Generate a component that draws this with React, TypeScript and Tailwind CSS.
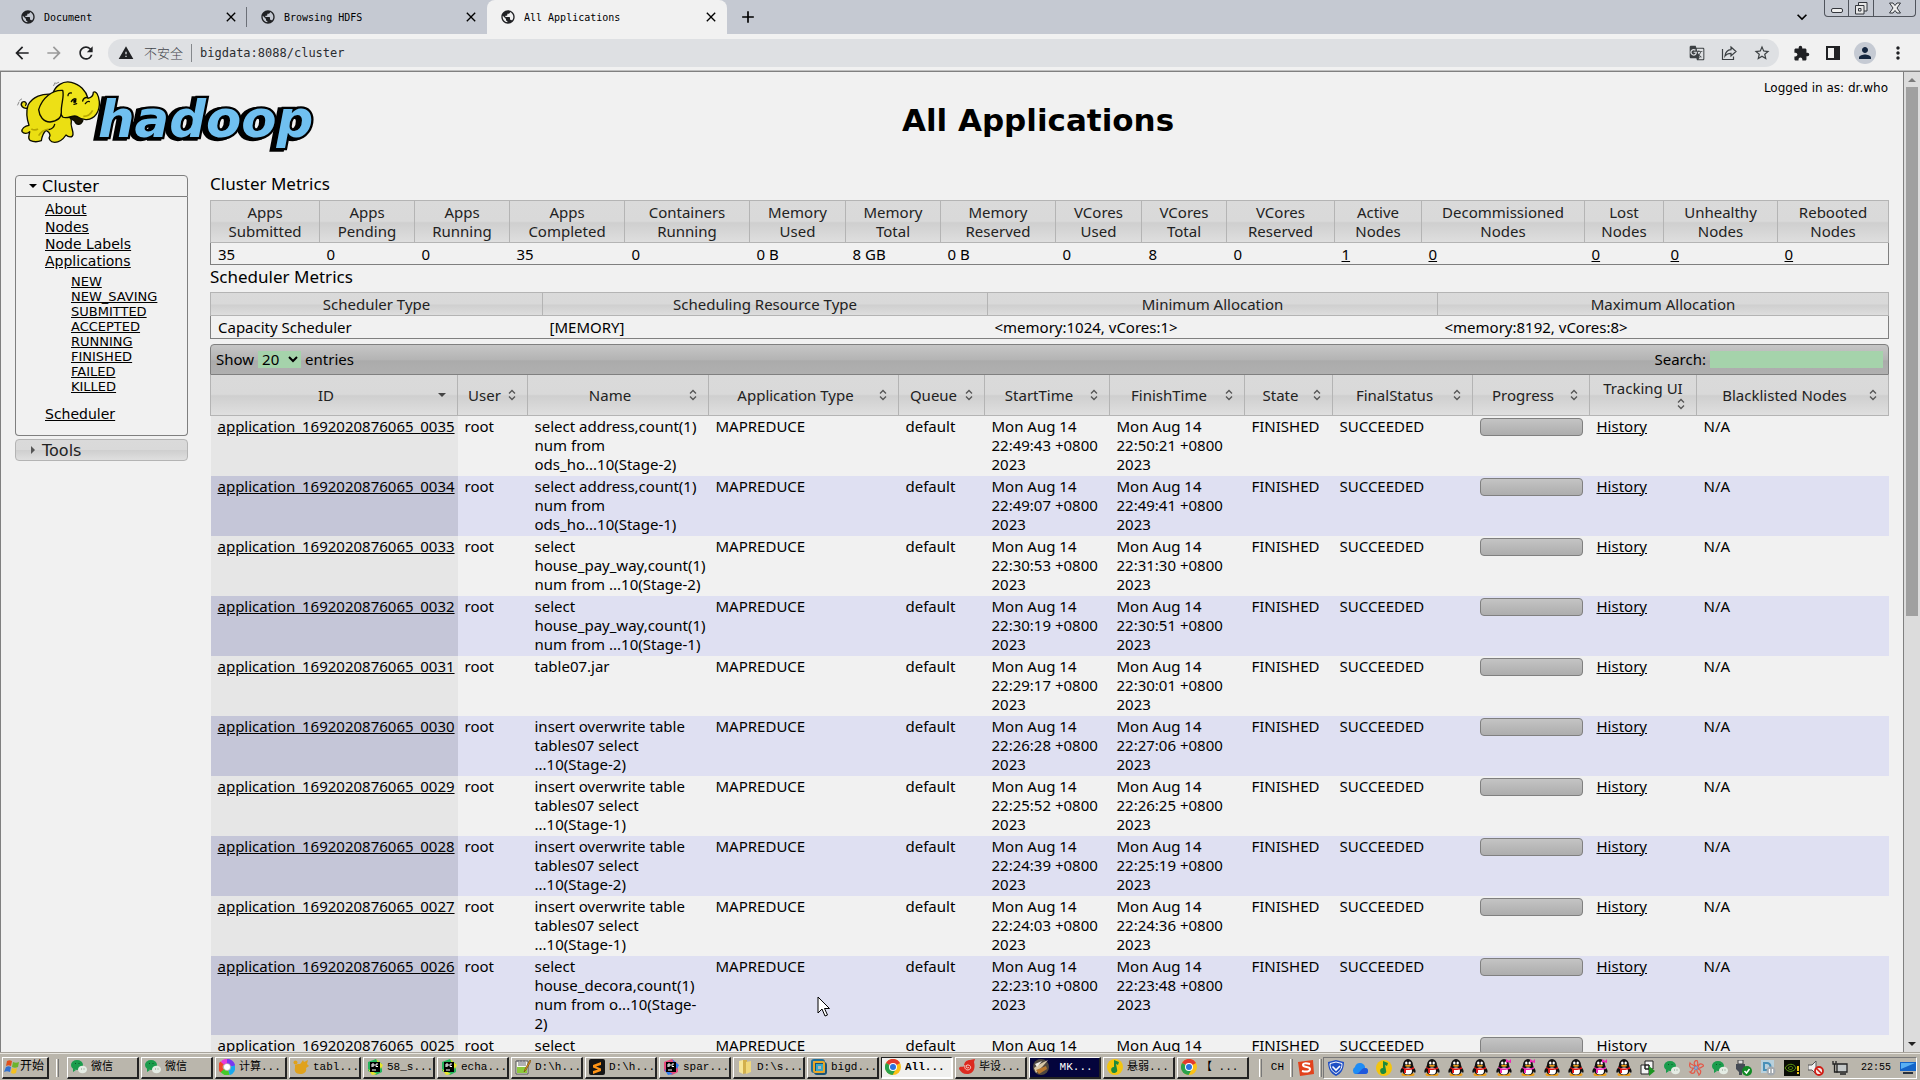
import React, { useState } from "react"
import {
    MdPublic, MdArrowBack, MdArrowForward, MdRefresh, MdWarning, MdGTranslate, MdStarBorder,
    MdExtension, MdPerson, MdMoreVert, MdClose, MdAdd, MdExpandMore,
} from "react-icons/md"

type Column = { label: string; width: string }

const clusterMetrics = [
    { label: "Apps\nSubmitted", value: "35", width: "w-[109px]" },
    { label: "Apps\nPending", value: "0", width: "w-[95px]" },
    { label: "Apps\nRunning", value: "0", width: "w-[95px]" },
    { label: "Apps\nCompleted", value: "35", width: "w-[115px]" },
    { label: "Containers\nRunning", value: "0", width: "w-[125px]" },
    { label: "Memory\nUsed", value: "0 B", width: "w-[96px]" },
    { label: "Memory\nTotal", value: "8 GB", width: "w-[95px]" },
    { label: "Memory\nReserved", value: "0 B", width: "w-[115px]" },
    { label: "VCores\nUsed", value: "0", width: "w-[86px]" },
    { label: "VCores\nTotal", value: "8", width: "w-[85px]" },
    { label: "VCores\nReserved", value: "0", width: "w-[108px]" },
    { label: "Active\nNodes", value: "1", width: "w-[87px]", link: true },
    { label: "Decommissioned\nNodes", value: "0", width: "w-[163px]", link: true },
    { label: "Lost\nNodes", value: "0", width: "w-[79px]", link: true },
    { label: "Unhealthy\nNodes", value: "0", width: "w-[114px]", link: true },
    { label: "Rebooted\nNodes", value: "0", width: "w-[111px]", link: true },
]

const schedulerMetrics = [
    { label: "Scheduler Type", value: "Capacity Scheduler", width: "w-[332px]" },
    { label: "Scheduling Resource Type", value: "[MEMORY]", width: "w-[445px]" },
    { label: "Minimum Allocation", value: "<memory:1024, vCores:1>", width: "w-[450px]" },
    { label: "Maximum Allocation", value: "<memory:8192, vCores:8>", width: "w-[451px]" },
]

const columns: Column[] = [
    { label: "ID", width: "w-[247px]" },
    { label: "User", width: "w-[70px]" },
    { label: "Name", width: "w-[181px]" },
    { label: "Application Type", width: "w-[190px]" },
    { label: "Queue", width: "w-[86px]" },
    { label: "StartTime", width: "w-[125px]" },
    { label: "FinishTime", width: "w-[135px]" },
    { label: "State", width: "w-[88px]" },
    { label: "FinalStatus", width: "w-[140px]" },
    { label: "Progress", width: "w-[117px]" },
    { label: "Tracking UI", width: "w-[107px]" },
    { label: "Blacklisted Nodes", width: "w-[192px]" },
]

const day = (time: string) => "Mon Aug 14\n" + time + " +0800\n2023"

const applications = [
    { id: "0035", name: "select address,count(1)\nnum from\nods_ho...10(Stage-2)", start: day("22:49:43"), finish: day("22:50:21") },
    { id: "0034", name: "select address,count(1)\nnum from\nods_ho...10(Stage-1)", start: day("22:49:07"), finish: day("22:49:41") },
    { id: "0033", name: "select\nhouse_pay_way,count(1)\nnum from ...10(Stage-2)", start: day("22:30:53"), finish: day("22:31:30") },
    { id: "0032", name: "select\nhouse_pay_way,count(1)\nnum from ...10(Stage-1)", start: day("22:30:19"), finish: day("22:30:51") },
    { id: "0031", name: "table07.jar", start: day("22:29:17"), finish: day("22:30:01") },
    { id: "0030", name: "insert overwrite table\ntables07 select\n...10(Stage-2)", start: day("22:26:28"), finish: day("22:27:06") },
    { id: "0029", name: "insert overwrite table\ntables07 select\n...10(Stage-1)", start: day("22:25:52"), finish: day("22:26:25") },
    { id: "0028", name: "insert overwrite table\ntables07 select\n...10(Stage-2)", start: day("22:24:39"), finish: day("22:25:19") },
    { id: "0027", name: "insert overwrite table\ntables07 select\n...10(Stage-1)", start: day("22:24:03"), finish: day("22:24:36") },
    { id: "0026", name: "select\nhouse_decora,count(1)\nnum from o...10(Stage-\n2)", start: day("22:23:10"), finish: day("22:23:48") },
    { id: "0025", name: "select", start: "Mon Aug 14", finish: "Mon Aug 14" },
]

const states = ["NEW", "NEW_SAVING", "SUBMITTED", "ACCEPTED", "RUNNING", "FINISHED", "FAILED", "KILLED"]

const headFill = "bg-[linear-gradient(#dadada_0%,#d9d9d9_48%,#cfcfcf_52%,#dfdfdf_100%)]"

/* ---------- browser chrome ---------- */

const Tab = ({ title, active, divider }: { title: string; active?: boolean; divider?: boolean }) => (
    <div className={"relative flex h-full w-60 items-center pl-[13px] pr-2 " + (active ? "rounded-t-lg bg-[#f1f1f1]" : "")}>
        <MdPublic className="h-4 w-4 shrink-0 text-[#202124]" />
        <span className="ml-2 flex-1 truncate font-['DejaVu_Sans_Mono',monospace] text-[10px]">{title}</span>
        <button aria-label={"Close " + title}><MdClose className="h-4 w-4" /></button>
        {divider && <span className="absolute right-0 h-5 w-px bg-[#6c7078]" />}
    </div>
)

const TabStrip = () => (
    <div className="flex h-[34px] shrink-0 bg-[#c5c9d2]">
        <div className="flex min-w-0 pl-[7px]">
            <Tab title="Document" divider />
            <Tab title="Browsing HDFS" />
            <Tab title="All Applications" active />
        </div>
        <button aria-label="New tab" className="ml-[11px]"><MdAdd className="h-5 w-5" /></button>
        <button aria-label="Search tabs" className="ml-auto mr-3"><MdExpandMore className="h-5 w-5" /></button>
        <div className="mr-1 flex h-[17px] rounded-b border border-t-0 border-[#50545c]">
            <button aria-label="Minimize" className="flex w-6 justify-center border-r border-[#50545c]">
                <svg width="14" height="14" viewBox="0 0 14 14"><rect x="1.500" y="8.500" width="11" height="4" rx="1.500" fill="#eee" stroke="#33363c" /></svg>
            </button>
            <button aria-label="Restore" className="flex w-[25px] justify-center border-r border-[#50545c]">
                <svg width="14" height="16" viewBox="0 0 14 16" fill="#e6e6e6" stroke="#33363c">
                    <path d="M4.500 2.500h8.500v8.500h-8.500z" />
                    <path d="M1.500 5.500h8.500v8.500h-8.500z" />
                    <path d="M4.500 8.500h2.500v2.500h-2.500z" />
                </svg>
            </button>
            <button aria-label="Close" className="flex w-[41px] justify-center">
                <svg width="14" height="16" viewBox="0 0 14 16" fill="#eee" stroke="#33363c" strokeWidth="1">
                    <path d="M1.500 3h3.500l2 2.500 2-2.500h3.500l-3.500 5 3.500 5h-3.500l-2-2.500-2 2.500h-3.500l3.500-5z" />
                </svg>
            </button>
        </div>
    </div>
)

const AddressBar = () => (
    <div className="flex h-[37px] shrink-0 items-center border-b border-[#c0c0c0] bg-[#f1f1f1] pl-3 pr-3 pt-[2px]">
        <button aria-label="Back"><MdArrowBack className="h-5 w-5 text-[#202124]" /></button>
        <button aria-label="Forward" className="ml-3"><MdArrowForward className="h-5 w-5 text-[#9a9a9a]" /></button>
        <button aria-label="Reload" className="ml-3"><MdRefresh className="h-5 w-5 text-[#202124]" /></button>
        <div className="ml-3 mr-3 flex h-7 flex-1 items-center rounded-full bg-[#dee0e3] pl-[10px] pr-2">
            <MdWarning className="h-4 w-4 text-[#202124]" />
            <span className="ml-[10px] font-['Noto_Sans_CJK_SC',sans-serif] text-[13px] font-light text-[#44474c]">不安全</span>
            <span className="mx-2 h-[18px] w-px bg-[#85888c]" />
            <input
                aria-label="Address"
                defaultValue="bigdata:8088/cluster"
                className="min-w-0 flex-1 bg-transparent font-['DejaVu_Sans_Mono',monospace] text-[12px] text-[#2a2c30] outline-none"
            />
            <button aria-label="Translate"><MdGTranslate className="h-4 w-4 text-[#3c4043]" /></button>
            <button aria-label="Share" className="ml-4">
                <svg width="16" height="16" viewBox="0 0 16 16" fill="none" stroke="#3c4043" strokeWidth="1.200">
                    <path d="M1.500 4v10.500h11v-3" />
                    <path d="M10 2l5 4.500-5 4.500v-2.700c-3 0-4.500.7-6 2.700.4-3.500 2.500-6 6-6.300z" />
                </svg>
            </button>
            <button aria-label="Bookmark" className="ml-4"><MdStarBorder className="h-[18px] w-[18px] text-[#3c4043]" /></button>
        </div>
        <button aria-label="Extensions" className="ml-[2px]"><MdExtension className="h-[17px] w-[17px] text-[#202124]" /></button>
        <button aria-label="Side panel" className="ml-4">
            <svg width="14" height="14" viewBox="0 0 14 14"><path d="M0 0h14v14h-14zM2 2v10h6v-10z" fill="#202124" fillRule="evenodd" /></svg>
        </button>
        <button aria-label="Profile" className="ml-[14px] flex h-[22px] w-[22px] items-center justify-center rounded-full bg-[#c5cad3]">
            <MdPerson className="h-[18px] w-[18px] text-[#14263f]" />
        </button>
        <button aria-label="Menu" className="ml-3"><MdMoreVert className="h-5 w-5 text-[#202124]" /></button>
    </div>
)

/* ---------- hadoop page ---------- */

const Logo = () => (
    <svg className="h-[77px] w-[302px]" viewBox="47 20 906 231" role="img" aria-label="hadoop">
        <g fontFamily="'DejaVu Sans', sans-serif" fontWeight="bold" fontStyle="italic" fontSize="154" strokeLinejoin="miter">
            <text x="286" y="204" fill="#000" stroke="#000" strokeWidth="16" aria-hidden="true">hadoop</text>
            <text x="296" y="201" fill="#70c0f0" stroke="#000" strokeWidth="14" paintOrder="stroke">hadoop</text>
        </g>
        <g stroke="#0c0c00" strokeWidth="4" strokeLinejoin="round" strokeLinecap="round">
            <path d="M86 113C72 117 60 105 69 95C78 91 84 99 79 105" fill="#e8dc14" />
            <path d="M55 104l4-9M61 90l6-4M163 46l4-9M169 40l9-4" fill="none" strokeWidth="2" stroke="#555" />
            <path d="M160 72C130 68 98 80 86 105C78 130 84 150 89 165C76 166 66 176 68 184C74 192 84 190 91 184C90 196 84 204 92 210C104 216 118 214 126 211C128 198 132 188 140 180C148 184 152 188 152 196C146 204 152 216 166 216C182 216 192 206 200 194C208 202 220 202 221 192C222 178 212 168 216 152L205 90Z" fill="#ebdf12" />
            <path d="M207 138C214 146 222 148 226 152C230 164 244 166 250 152L252 138Z" fill="#1a1400" />
            <path d="M160 72C166 46 192 30 216 36C242 42 260 62 266 84C276 82 282 76 282 66C290 60 298 74 300 94C302 122 288 146 262 148C248 149 240 144 232 138C222 132 204 148 190 140C176 120 164 90 160 72Z" fill="#f0e51a" />
            <path d="M190 60C158 58 128 84 118 118C120 138 132 154 152 155C172 153 186 144 186 126C184 104 196 78 190 60Z" fill="#ede016" />
            <path d="M206 76c0-6 4-9 10-8M216 94c4-8 10-10 14-8l-4 8M250 92c2-8 8-12 14-10M258 100c4-6 8-8 12-6M232 100l-8 2M148 178c10-2 16-8 18-16" fill="none" strokeWidth="4" />
            <path d="M222 88l8 0 0 8-6 1z" fill="#000" strokeWidth="2" />
        </g>
        <path d="M118 196c8-14 18-18 30-20M96 176c8 4 14 4 20 0M280 120c-6 12-16 18-28 18" fill="none" stroke="#b8a800" strokeWidth="5" />
    </svg>
)

const Sidebar = () => {
    const [open, setOpen] = useState(true)

    return (
        <nav className="w-[173px] shrink-0 font-['DejaVu_Sans',sans-serif]">
            <button
                className="flex h-[22px] w-full items-center rounded-t border border-[#7f7f7f] pl-3 text-[16px]"
                onClick={() => setOpen(!open)}
            >
                <svg width="10" height="10" viewBox="0 0 10 10" className="mr-1"><path d="M1 3h8l-4 4z" /></svg>
                Cluster
            </button>
            {open && (
                <div className="flex flex-col items-start rounded-b border border-t-0 border-[#7f7f7f] pb-3 pl-[29px] pt-[4px] text-[14px] leading-[17px] underline">
                    <a href="#about">About</a>
                    <a href="#nodes" className="mt-[1px]">Nodes</a>
                    <a href="#labels">Node Labels</a>
                    <a href="#apps">Applications</a>
                    <ul className="mb-[12px] mt-1 pl-[26px] text-[13px]">
                        {states.map((s) => (
                            <li key={s} className="h-[15px] leading-[15px]"><a href={"#" + s}>{s}</a></li>
                        ))}
                    </ul>
                    <a href="#scheduler">Scheduler</a>
                </div>
            )}
            <button className={"mt-[3px] flex h-[22px] w-full items-center rounded border border-[#b4b4b4] pl-3 text-[16px] text-[#222] " + headFill}>
                <svg width="10" height="10" viewBox="0 0 10 10" className="mr-1"><path d="M3 1v8l4-4z" fill="#555" /></svg>
                Tools
            </button>
        </nav>
    )
}

const SortIcon = ({ sorted }: { sorted?: boolean }) => (
    <svg width="16" height="12" viewBox="0 0 16 12" className="shrink-0">
        {sorted
            ? <path d="M4 4h8l-4 4z" fill="#444" />
            : <path d="M5 4.500l3-3 3 3M5 7.500l3 3 3-3" fill="none" stroke="#555" strokeWidth="1.300" />}
    </svg>
)

const ApplicationsTable = () => (
    <table className="w-full table-fixed border-collapse">
        <thead>
            <tr className={"h-10 " + headFill}>
                {columns.map((c, i) => (
                    <th key={c.label} className={"border border-t-0 border-[#b4b4b4] p-0 font-normal text-[#222] " + c.width}>
                        {c.label === "Tracking UI" ? (
                            <button className="flex w-full flex-col px-[7px] leading-[19px]">
                                <span className="w-full">{c.label}</span>
                                <span className="flex w-full justify-end"><SortIcon /></span>
                            </button>
                        ) : (
                            <button className="flex w-full items-center px-[7px] pt-[1px]">
                                <span className="flex-1 whitespace-nowrap">{c.label}</span>
                                <SortIcon sorted={i === 0} />
                            </button>
                        )}
                    </th>
                ))}
            </tr>
        </thead>
        <tbody>
            {applications.map((app, i) => (
                <tr key={app.id} className={"align-top " + (i % 2 ? "bg-[#dfe0f2]" : "")}>
                    <td className={"pl-[7px] pb-[2px] pt-[1px] " + (i % 2 ? "bg-[#c5c6d8]" : "bg-[#e6e6e6]")}>
                        <a href={"#" + app.id} className="underline">application_1692020876065_{app.id}</a>
                    </td>
                    <td className="pl-[7px] pt-[1px]">root</td>
                    <td className="whitespace-pre pb-[2px] pl-[7px] pt-[1px]">{app.name}</td>
                    <td className="pl-[7px] pt-[1px]">MAPREDUCE</td>
                    <td className="pl-[7px] pt-[1px]">default</td>
                    <td className="whitespace-pre pb-[2px] pl-[7px] pt-[1px]">{app.start}</td>
                    <td className="whitespace-pre pb-[2px] pl-[7px] pt-[1px]">{app.finish}</td>
                    <td className="pl-[7px] pt-[1px]">FINISHED</td>
                    <td className="pl-[7px] pt-[1px]">SUCCEEDED</td>
                    <td className="px-[7px] pt-[2px]">
                        <div className="h-[18px] rounded border border-[#808080] bg-[linear-gradient(#c4c4c4,#adadad)]" />
                    </td>
                    <td className="pl-[7px] pt-[1px]"><a href={"#history-" + app.id} className="underline">History</a></td>
                    <td className="pl-[7px] pt-[1px]">N/A</td>
                </tr>
            ))}
        </tbody>
    </table>
)

const Page = () => (
    <main className="min-w-0 flex-1 overflow-hidden border-l border-r border-t border-[#808080] bg-[#f1f1f1] font-['Noto_Sans',sans-serif] text-[15px] leading-[19px] text-black">
        <header className="relative flex h-[103px] items-start pl-[14px] pr-[15px] pt-[5px]">
            <Logo />
            <h1 className="flex-1 pr-[129px] pt-[25px] text-center font-['DejaVu_Sans',sans-serif] text-[31px] font-bold leading-[36px]">All Applications</h1>
            <p className="absolute right-[15px] top-[7px] font-['DejaVu_Sans',sans-serif] text-[12px]">Logged in as: dr.who</p>
        </header>
        <div className="flex items-start gap-[22px] pl-[14px] pr-[14px]">
            <Sidebar />
            <section className="min-w-0 flex-1">
                <h2 className="pb-2 text-[17px] leading-[17px]">Cluster Metrics</h2>
                <table className="w-full table-fixed border-collapse border border-[#7f7f7f]">
                    <thead>
                        <tr className={headFill}>
                            {clusterMetrics.map((m) => (
                                <th key={m.label} className={"h-[42px] whitespace-pre border border-[#b4b4b4] p-0 pt-[1px] font-normal text-[#222] " + m.width}>{m.label}</th>
                            ))}
                        </tr>
                    </thead>
                    <tbody>
                        <tr>
                            {clusterMetrics.map((m) => (
                                <td key={m.label} className="h-[22px] p-0 pl-[7px] pt-[1px]">
                                    {m.link ? <a href="#nodes" className="underline">{m.value}</a> : m.value}
                                </td>
                            ))}
                        </tr>
                    </tbody>
                </table>
                <h2 className="pb-1 text-[17px] leading-[23px]">Scheduler Metrics</h2>
                <table className="w-full table-fixed border-collapse border border-[#7f7f7f]">
                    <thead>
                        <tr className={headFill}>
                            {schedulerMetrics.map((m) => (
                                <th key={m.label} className={"h-[23px] border border-[#b4b4b4] p-0 pt-[1px] font-normal text-[#222] " + m.width}>{m.label}</th>
                            ))}
                        </tr>
                    </thead>
                    <tbody>
                        <tr>
                            {schedulerMetrics.map((m) => (
                                <td key={m.label} className="h-[23px] p-0 pl-[7px] pt-[1px]">{m.value}</td>
                            ))}
                        </tr>
                    </tbody>
                </table>
                <div className="mt-[5px] flex h-[31px] items-center rounded-t border border-[#808080] bg-[linear-gradient(#c6c6c6_0%,#b4b4b4_50%,#ababab_55%,#b0b0b0_100%)] px-[5px]">
                    <label className="flex items-center gap-1">
                        Show
                        <span className="relative flex">
                            <select className="h-[17px] w-[43px] appearance-none bg-[#a5d3ab] pl-1 leading-[17px]">
                                <option>20</option>
                            </select>
                            <svg width="10" height="7" viewBox="0 0 10 7" className="pointer-events-none absolute right-[3px] top-[5px]">
                                <path d="M1 1l4 4 4-4" fill="none" stroke="#000" strokeWidth="2" />
                            </svg>
                        </span>
                        entries
                    </label>
                    <label className="ml-auto flex items-center gap-1">
                        Search:
                        <input type="text" className="h-[17px] w-[173px] bg-[#a5d3ab] outline-none" />
                    </label>
                </div>
                <ApplicationsTable />
            </section>
        </div>
    </main>
)

const Scrollbar = () => (
    <div className="flex w-4 shrink-0 flex-col items-center border-t border-[#808080] bg-[#dcdcdc]">
        <svg width="16" height="15" viewBox="0 0 16 15"><path d="M4 10h8l-4-4z" fill="#7a7a7a" /></svg>
        <div className="h-[54%] w-3 bg-[#a0a0a0]" />
        <svg width="16" height="15" viewBox="0 0 16 15" className="mt-auto"><path d="M4 5h8l-4 4z" fill="#222" /></svg>
    </div>
)

/* ---------- taskbar ---------- */

const WeChat = () => (
    <svg width="16" height="16" viewBox="0 0 16 16">
        <ellipse cx="6" cy="6" rx="6" ry="5" fill="#1a9c4c" />
        <path d="M2 9l0 4 3-2z" fill="#1a9c4c" />
        <ellipse cx="11.500" cy="10.500" rx="4.500" ry="3.800" fill="#e4ece4" />
        <path d="M4 4.500h1M7.500 4.500h1" stroke="#0c5428" strokeWidth="1.200" />
        <path d="M10 10h1M12.500 10h1" stroke="#879487" />
    </svg>
)

const Pinwheel = () => (
    <svg width="16" height="16" viewBox="0 0 16 16" fill="none" strokeWidth="4.500">
        <path d="M3 5a6 6 0 0 1 5-3" stroke="#e63bd8" />
        <path d="M8 2a6 6 0 0 1 6 5" stroke="#7a38f0" />
        <path d="M14 7a6 6 0 0 1-4 7" stroke="#18a8ee" />
        <path d="M10 14a6 6 0 0 1-7-3" stroke="#45cb28" />
        <path d="M3 12a6 6 0 0 1 0-8" stroke="#f04428" />
        <circle cx="8" cy="8" r="3" fill="#fff" />
    </svg>
)

const Beaver = () => (
    <svg width="16" height="16" viewBox="0 0 16 16" fill="#e0a21c">
        <path d="M2 6c3-2 5 0 6-2l2-3 1 2 4-2-1 4 2 2-3 2c1 4-2 6-6 6s-6-3-5-6z" /><circle cx="2.500" cy="3.500" r="2" />
    </svg>
)

const Jet = ({ a, b }: { a: string; b: string }) => (
    <svg width="16" height="16" viewBox="0 0 16 16">
        <path d="M1 3l8-3 6 5v8l-6 3-8-4z" fill={a} />
        <path d="M9 0l7 6-2 4zM1 10l4 6 5-1z" fill={b} />
        <rect x="3" y="3" width="10" height="10" fill="#000" />
        <path d="M5 8v-3h2v2h-2M11 5h-2v2.500h2M5 11h4" fill="none" stroke="#fff" />
    </svg>
)

const Notepad = () => (
    <svg width="16" height="16" viewBox="0 0 16 16">
        <path d="M1 2h12v13h-12z" fill="#fafaf0" stroke="#555" />
        <path d="M2 8h10v6h-10z" fill="#8cc83c" />
        <path d="M3 4h8M3 6h8M3 1v2M6 1v2M9 1v2" stroke="#667" />
        <path d="M15 1l-5 9-1 3 2-2 5-9z" fill="#e8a020" stroke="#6a3c08" strokeWidth=".6" />
    </svg>
)

const Sublime = () => (
    <svg width="16" height="16" viewBox="0 0 16 16">
        <rect width="16" height="16" rx="2" fill="#161616" />
        <path d="M12 3v3l-5 1.500 5 2v2.500l-8 3v-3l5-1.500-5-2v-2.500z" fill="#ff9416" />
    </svg>
)

const Folder = () => (
    <svg width="16" height="16" viewBox="0 0 16 16">
        <path d="M2 2l4-1v14l-4-2z" fill="#f7e69a" /><path d="M6 1h4v13l-4 1z" fill="#d3b04c" />
        <path d="M9 3l5-1v11l-5 2z" fill="#f0d87c" />
    </svg>
)

const VmWare = () => (
    <svg width="16" height="16" viewBox="0 0 16 16" fill="none" strokeWidth="2">
        <rect x="1" y="1" width="12" height="12" rx="2" stroke="#1f6e98" />
        <rect x="4" y="4" width="11" height="11" rx="2" stroke="#1a5478" />
        <rect x="3" y="3" width="10" height="10" rx="1" stroke="#e8a628" />
        <rect x="6" y="6" width="5" height="5" stroke="#38a8c8" />
    </svg>
)

const Chrome = () => (
    <svg width="16" height="16" viewBox="0 0 16 16">
        <circle cx="8" cy="8" r="8" fill="#fbc116" />
        <path d="M8 8L1 4a8 8 0 0 1 14 0z" fill="#e33b2e" />
        <path d="M8 8L1 4a8 8 0 0 0 6.500 12l3.500-6z" fill="#2ba24c" />
        <circle cx="8" cy="8" r="4" fill="#fff" /><circle cx="8" cy="8" r="3" fill="#2a72e0" />
    </svg>
)

const Swirl = () => (
    <svg width="16" height="16" viewBox="0 0 16 16">
        <path d="M0 10c0-4 4-1 5-3 0-4 3-6 6-6l5-1-1 3c2 8-2 12-7 12-4 0-6-2-8-5z" fill="#dc2a20" />
        <path d="M10 8a1.500 1.500 0 1 1-1-2c3 0 4 4 0 5-3 0-4-3-3-5" fill="none" stroke="#f7c8c0" />
    </svg>
)

const Blade = () => (
    <svg width="16" height="16" viewBox="0 0 16 16">
        <circle cx="8" cy="8" r="8" fill="#4f4740" />
        <path d="M1 9l6-4 8-4-5 6-7 7z" fill="#d8c8a8" /><path d="M3 11l10-4 1 3-8 5z" fill="#b87830" />
        <path d="M2 5l7-3-5 6z" fill="#f0eee8" />
    </svg>
)

const Music = () => (
    <svg width="16" height="16" viewBox="0 0 16 16">
        <circle cx="8" cy="8" r="8" fill="#f3c50e" />
        <path d="M7 1l5 2-1 3-2-1 1 5a3 3 0 1 1-3-2z" fill="#1b8a3c" />
    </svg>
)

const Penguin = ({ scarf, bow }: { scarf: string; bow?: boolean }) => (
    <svg width="16" height="17" viewBox="0 0 16 17">
        <ellipse cx="5" cy="15.500" rx="3.500" ry="1.500" fill="#f0a018" /><ellipse cx="11" cy="15.500" rx="3.500" ry="1.500" fill="#f0a018" />
        <path d="M3 8c-3 2-3 5-2 6l2-2zM13 8c3 2 3 5 2 6l-2-2z" fill="#111" />
        <path d="M3 6a5 6 0 0 1 10 0c2 5 1 10-5 10s-7-5-5-10z" fill="#111" />
        <ellipse cx="8" cy="12" rx="4" ry="3.500" fill="#fff" />
        <ellipse cx="6.300" cy="4" rx="1.200" ry="1.600" fill="#fff" /><ellipse cx="9.700" cy="4" rx="1.200" ry="1.600" fill="#fff" />
        <ellipse cx="8" cy="6.700" rx="3" ry="1" fill="#f0a018" />
        <path d="M2 8c4 2 8 2 12 0v2c-4 1-6 1-8 1v3h-2v-4l-2-1z" fill={scarf} />
        {bow && <path d="M10 0l3 2 2-2v4l-3-1-2 1z" fill="#f028b4" />}
    </svg>
)

const tasks = [
    { label: "微信", icon: <WeChat /> },
    { label: "微信", icon: <WeChat /> },
    { label: "计算...", icon: <Pinwheel /> },
    { label: "tabl...", icon: <Beaver /> },
    { label: "58_s...", icon: <Jet a="#24b45c" b="#e8e42c" /> },
    { label: "echa...", icon: <Jet a="#24b45c" b="#e8e42c" /> },
    { label: "D:\\h...", icon: <Notepad /> },
    { label: "D:\\h...", icon: <Sublime /> },
    { label: "spar...", icon: <Jet a="#e8487c" b="#2a7cf0" /> },
    { label: "D:\\s...", icon: <Folder /> },
    { label: "bigd...", icon: <VmWare /> },
    { label: "All...", icon: <Chrome />, look: "active" },
    { label: "毕设...", icon: <Swirl /> },
    { label: " MK...", icon: <Blade />, look: "dark" },
    { label: "悬弱...", icon: <Music /> },
    { label: "【 ...", icon: <Chrome /> },
]

const taskLook: Record<string, string> = {
    normal: "border-b-[#222] border-l-white border-r-[#222] border-t-white",
    active: "border-b-white border-l-[#222] border-r-white border-t-[#222] bg-[#f0f0ee] font-bold",
    dark: "border-b-[#222] border-l-white border-r-[#222] border-t-white bg-[#04043c] text-white",
}

const scarves = ["red", "red", "red", "red", "pink", "pink", "red", "red", "pink", "red"]

const Divider = () => <span className="h-[18px] w-[3px] shrink-0 border-l border-r border-l-white border-r-[#777]" />

const Taskbar = () => (
    <footer className="flex h-7 shrink-0 items-center border-t border-[#a8a49c] bg-[#bab6ac] pl-[2px] pr-[3px] pt-[2px] font-['Liberation_Mono','Noto_Sans_CJK_SC',monospace] text-[11px] shadow-[inset_0_1px_0_#e8e6e0]">
        <button className="flex h-[22px] w-[47px] shrink-0 items-center border-b-2 border-l border-r-2 border-t border-b-[#222] border-l-white border-r-[#222] border-t-white pl-[1px] text-[12px]">
            <svg width="16" height="16" viewBox="0 0 16 16" className="shrink-0">
                <path d="M3 2c2-1 3-1 5 0l-1 5c-2-1-3-1-5 0z" fill="#e0501c" /><path d="M9 3c2 1 4 1 6 0l-1 5c-2 1-4 1-6 0z" fill="#6cb42c" />
                <path d="M2 8c2-1 3-1 5 0l-1 5c-2-1-4-1-6 0z" fill="#3070d0" /><path d="M8 9c2 1 3 1 5 0l-1 5c-2 1-3 1-5 0z" fill="#f4c020" />
            </svg>
            <span className="whitespace-nowrap">开始</span>
        </button>
        <span className="ml-[7px] mr-2 flex"><Divider /></span>
        <div className="flex min-w-0 flex-1 gap-[2px]">
            {tasks.map((t, i) => (
                <button
                    key={i}
                    className={"flex h-[22px] min-w-0 max-w-[72px] flex-1 items-center border-b-2 border-l border-r-2 border-t pl-[3px] " + taskLook[t.look || "normal"]}
                >
                    <span className="shrink-0">{t.icon}</span>
                    <span className="ml-1 overflow-hidden whitespace-pre">{t.label}</span>
                </button>
            ))}
        </div>
        <Divider />
        <span className="ml-[9px] mr-[6px]">CH</span>
        <Divider />
        <svg width="16" height="16" viewBox="0 0 16 16" className="mx-[5px] shrink-0">
            <path d="M0 2l15-2 1 14-14 2z" fill="#e2421c" />
            <path d="M12 4c-4-1-7-1-7 1 0 3 7 1 7 4 0 3-4 3-8 2" fill="none" stroke="#fff" strokeWidth="2" />
        </svg>
        <Divider />
        <div className="ml-[1px] flex h-[22px] shrink-0 items-center gap-2 border border-b-white border-l-[#777] border-r-white border-t-[#777] pl-1">
            <svg width="16" height="16" viewBox="0 0 16 16"><path d="M8 0l8 2c0 7-3 12-8 14-5-2-8-7-8-14z" fill="#1f4fc4" /><path d="M8 2l6 1.500c0 5-2 8-6 10-4-2-6-5-6-10z" fill="none" stroke="#fff" /><path d="M4.500 6.500l3.500 3.500 4-4" fill="none" stroke="#fff" strokeWidth="1.600" /></svg>
            <svg width="16" height="16" viewBox="0 0 16 16"><path d="M3 14a4 4 0 0 1 0-7 5 5 0 0 1 8-3c2 1 2 3 2 4a3 3 0 0 1 0 6z" fill="#1e8cf4" /><path d="M3 14c6 0 5-6 10-6a3 3 0 0 1 0 6z" fill="#2058dc" /></svg>
            <Music />
            {scarves.map((s, i) => (
                <Penguin key={i} scarf={s === "pink" ? "#f028b4" : "#e01818"} bow={s === "pink"} />
            ))}
            <svg width="16" height="16" viewBox="0 0 16 16"><path d="M5 1h8v8h-8zM1 5h8v9h-8z" fill="#f4f4f4" stroke="#222" /><path d="M5 5h4v4h-4z" fill="none" stroke="#222" /><path d="M9 6l6 5-6 5z" fill="#1c9420" /></svg>
            <WeChat />
            <svg width="16" height="16" viewBox="0 0 16 16" fill="none" stroke="#e45848" strokeWidth="1.200">
                <path d="M8 6c-3-2-2-5 1-6 0 2 2 3 0 6M10 7c1-4 4-4 6-1-2 0-3 3-6 2M10 9c4 1 3 4 1 6 0-2-3-3-2-6M7 10c0 4-3 4-5 2 2 0 2-3 4-4M6 8c-4 1-5-2-4-5 1 2 4 1 5 4" />
                <circle cx="8" cy="8" r="1.500" stroke="#6888c8" />
            </svg>
            <WeChat />
            <svg width="16" height="16" viewBox="0 0 16 16"><path d="M2 0h5v4h-5z" fill="#ddd" stroke="#444" /><path d="M0 4h9v5l-3 3v3h-3v-3l-3-3z" fill="#444b55" /><circle cx="11" cy="11" r="5" fill="#128a24" /><path d="M8.500 11l2 2 3-4" fill="none" stroke="#fff" strokeWidth="1.500" /></svg>
            <svg width="16" height="16" viewBox="0 0 16 16"><rect x="1" width="13" height="13" fill="#b8d0dc" /><path d="M4 3h3a3 3 0 0 1 0 7h-3z" fill="none" stroke="#4890b8" strokeWidth="2" /><circle cx="11" cy="11" r="4.500" fill="#a4aab0" /><path d="M9.500 9v4M12.500 9v4" stroke="#fff" strokeWidth="1.300" /></svg>
            <svg width="16" height="16" viewBox="0 0 16 16"><rect width="16" height="16" fill="#0a0c06" /><path d="M1 8c3-5 9-5 11 0-2 4-8 5-11 0zM4 8c2-2 4-2 5 0-1 2-4 2-5 0z" fill="none" stroke="#5c9a10" /><path d="M13 6h2v5h-2zM13 12h2v2h-2z" fill="#f0c818" /></svg>
            <svg width="16" height="16" viewBox="0 0 16 16"><path d="M0 5h4l4-4v13l-4-4h-4z" fill="#f0f0f0" stroke="#555" /><circle cx="11" cy="11" r="4" fill="#f8e8e4" stroke="#d01c14" strokeWidth="1.800" /><path d="M8 8l6 6" stroke="#d01c14" strokeWidth="1.600" /></svg>
            <svg width="16" height="16" viewBox="0 0 16 16"><path d="M5 4h10v8h-10zM8 14h6" fill="#c4c8c8" stroke="#222" strokeWidth="1.300" /><path d="M1 1v3h3v-3M2.500 4v8h3" fill="none" stroke="#222" strokeWidth="1.300" /></svg>
            <span className="ml-1 w-8 text-center text-[10px]">22:55</span>
            <svg width="16" height="14" viewBox="0 0 16 14"><path d="M0 1h16v9h-16z" fill="#1464c8" /><path d="M1 2h14l-14 6z" fill="#58b0f4" /><path d="M3 11h10v2h-10z" fill="#28303c" /></svg>
        </div>
    </footer>
)

const App = () => (
    <div className="relative flex h-screen flex-col overflow-hidden bg-[#f1f1f1] text-black">
        <TabStrip />
        <AddressBar />
        <div className="flex min-h-0 flex-1">
            <Page />
            <Scrollbar />
        </div>
        <Taskbar />
        {/* mouse pointer */}
        <svg width="13" height="21" viewBox="0 0 13 21" className="pointer-events-none absolute left-[817px] top-[996px]">
            <path d="M1 1v16l4-4 3 7 2.500-1-3-6.500h5z" fill="#fff" stroke="#000" />
        </svg>
    </div>
)

export default App
